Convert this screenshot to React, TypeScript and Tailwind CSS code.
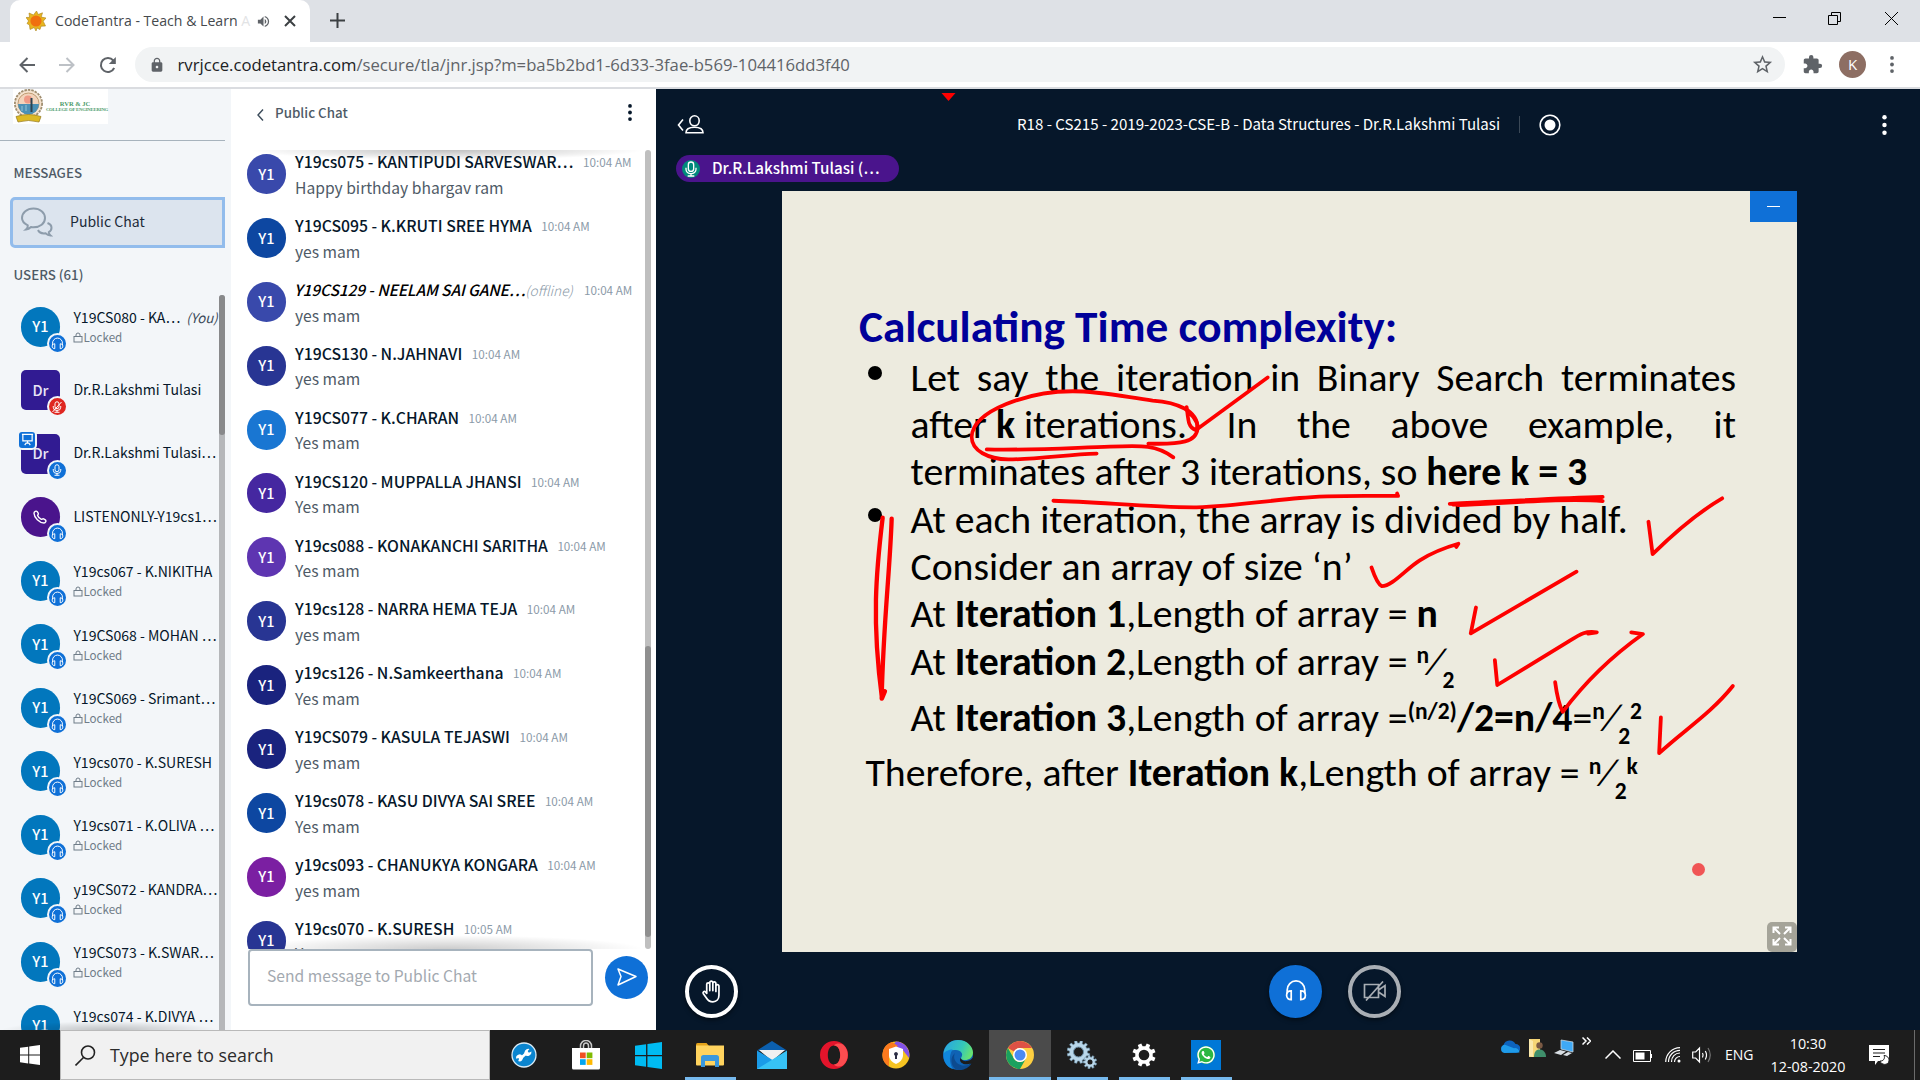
import React from "react";
import { FaWhatsapp } from "react-icons/fa";
import { MdExtension, MdLock, MdStarBorder, MdVolumeUp } from "react-icons/md";

type Kids = { children?: React.ReactNode };

/* ---------- icons ---------- */

function Headphones({ className }: { className: string }) {
  return (
    <svg viewBox="0 0 24 24" className={className} fill="none" stroke="currentColor" strokeWidth="1.800">
      <path d="M2.800 15v-3.500a9.200 9.500 0 0 1 18.400 0V15" />
      <path d="M7 12.500v9c-2.800 0-4.800-1.500-4.800-4.500s2-4.500 4.800-4.500zM17 12.500v9c2.800 0 4.800-1.500 4.800-4.500s-2-4.500-4.800-4.500z" />
    </svg>
  );
}

function Mic({ className, muted }: { className: string; muted?: boolean }) {
  return (
    <svg viewBox="0 0 24 24" className={className} fill="none" stroke="currentColor" strokeWidth="2">
      <rect x="8" y="1.500" width="8" height="14" rx="4" />
      <path d="M4.500 10v2.500a7.500 6.500 0 0 0 15 0V10M12 19v3.500M7 22.500h10" />
      {muted && <path d="M21 2 3 22" />}
    </svg>
  );
}

function Padlock() {
  return (
    <svg viewBox="0 0 10 11" className="h-[11px] w-[10px]" fill="none" stroke="currentColor" strokeWidth="1">
      <rect x="1" y="4.500" width="8" height="5.500" />
      <path d="M3 4.500V3a2 2 0 0 1 4 0v1.500" />
    </svg>
  );
}

function Dots({ className }: { className: string }) {
  return (
    <svg viewBox="0 0 4 18" className={className} fill="currentColor">
      <circle cx="2" cy="2" r="2" />
      <circle cx="2" cy="9" r="2" />
      <circle cx="2" cy="16" r="2" />
    </svg>
  );
}

function Favicon() {
  return (
    <svg viewBox="0 0 20 20" className="h-5 w-5 shrink-0">
      <path d="M10.500 0l1.700 3.500 4.300-1.700-1.300 4.300L20 7l-2.800 3.200L19.500 15l-4.500.2L14 18.500l-3-1.500-1 3-1.800-3.500L4 18.500l-.5-4.500L1 12.500 2.600 10 0 6.500l3.600-.200L3 2l4.500 2z" fill="#e8b51f" stroke="#a9821a" strokeWidth=".6" />
      <circle cx="10" cy="10" r="5.600" fill="#f0700f" />
    </svg>
  );
}

/* ---------- browser chrome ---------- */

function TabStrip() {
  return (
    <div className="flex h-[42px] bg-[#dee1e6]">
      <div className="ml-[10px] flex w-[300px] items-center rounded-t-[10px] bg-white pl-4">
        <Favicon />
        <div className="ml-[9px] w-[192px] whitespace-nowrap text-[14.100px] text-[#45494d]">
          CodeTantra - Teach &amp; Learn <span className="text-[#e2e3e5]">A</span>
        </div>
        <MdVolumeUp className="ml-[9px] h-[15px] w-[15px] text-[#5f6368]" />
        <svg viewBox="0 0 12 12" className="ml-[13px] h-[12px] w-[12px]" stroke="#3c4043" strokeWidth="2">
          <path d="M1 1l10 10M11 1L1 11" />
        </svg>
      </div>
      <svg viewBox="0 0 15 15" className="ml-5 mt-[13px] h-[15px] w-[15px]" stroke="#3c4043" strokeWidth="2">
        <path d="M7.500 0v15M0 7.500h15" />
      </svg>
      <div className="ml-auto mr-[22px] flex h-[36px] items-center gap-[43px] text-black">
        <svg viewBox="0 0 13 13" className="h-[13px] w-[13px]" stroke="currentColor"><path d="M0 5.500h13" /></svg>
        <svg viewBox="0 0 13 13" className="-ml-px mr-px h-[13px] w-[13px]" stroke="currentColor" fill="none">
          <path d="M.5 3.500h9v9h-9zM3.500 3V.500h9v9H10" />
        </svg>
        <svg viewBox="0 0 13 13" className="h-[13px] w-[13px]" stroke="currentColor"><path d="M0 0l13 13M13 0L0 13" /></svg>
      </div>
    </div>
  );
}

function AddressBar() {
  return (
    <div className="flex h-[47px] items-center border-b-2 border-[#dadce0] bg-white pl-[19px] text-[#5f6368]">
      <svg viewBox="0 0 16 16" className="h-4 w-4" fill="none" stroke="currentColor" strokeWidth="2"><path d="M8.500 1L1.500 8l7 7M1.500 8H16" /></svg>
      <svg viewBox="0 0 16 16" className="ml-6 h-4 w-4 text-[#bdc1c6]" fill="none" stroke="currentColor" strokeWidth="2"><path d="M7.500 1l7 7-7 7M14.500 8H0" /></svg>
      <svg viewBox="0 0 18 18" className="ml-6 h-[18px] w-[18px]" fill="none" stroke="currentColor" strokeWidth="2">
        <path d="M15.200 12A7 7 0 1 1 14.300 4.500L15.500 6" />
        <path d="M16.800 1v7h-7z" fill="currentColor" stroke="none" />
      </svg>
      <div className="ml-[18px] flex h-[35px] w-[1650px] items-center rounded-full bg-[#f1f3f4] pl-[14px] pr-[11px]">
        <MdLock className="h-4 w-4" />
        <span className="ml-[12.500px] whitespace-nowrap text-[16.700px]">
          <span className="text-[#202124]">rvrjcce.codetantra.com</span>/secure/tla/jnr.jsp?m=ba5b2bd1-6d33-3fae-b569-104416dd3f40
        </span>
        <MdStarBorder className="ml-auto h-[23px] w-[23px]" />
      </div>
      <MdExtension className="ml-[17px] h-[21px] w-[21px]" />
      <div className="ml-[16px] flex h-[27px] w-[27px] items-center justify-center rounded-full bg-[#8d6e63] text-[15px] text-white">K</div>
      <Dots className="ml-[24px] h-[17px] w-[4px]" />
    </div>
  );
}

/* ---------- user list ---------- */

type User = { name: string; you?: boolean; kind?: "muted" | "presenter" | "phone" };

const users: User[] = [
  { name: "Y19CS080 - KA…", you: true },
  { name: "Dr.R.Lakshmi Tulasi", kind: "muted" },
  { name: "Dr.R.Lakshmi Tulasi…", kind: "presenter" },
  { name: "LISTENONLY-Y19cs1…", kind: "phone" },
  { name: "Y19cs067 - K.NIKITHA" },
  { name: "Y19CS068 - MOHAN …" },
  { name: "Y19CS069 - Srimant…" },
  { name: "Y19cs070 - K.SURESH" },
  { name: "Y19cs071 - K.OLIVA …" },
  { name: "y19CS072 - KANDRA…" },
  { name: "Y19CS073 - K.SWAR…" },
  { name: "Y19cs074 - K.DIVYA …" },
];

function UserAvatar({ kind }: { kind?: User["kind"] }) {
  const badge = "absolute -bottom-[7px] -right-[8px] flex h-[21px] w-[21px] items-center justify-center rounded-full border-2 border-[#f3f6f9] text-white";
  if (kind === "muted" || kind === "presenter") {
    return (
      <div className="relative flex h-10 w-[39px] items-center justify-center rounded-[5px] bg-[#311b92] pb-px text-[14.500px] font-medium text-[#e9e6f5]">
        Dr
        {kind === "presenter" && (
          <div className="absolute -left-[4px] -top-[4px] flex h-[20px] w-[20px] items-center justify-center rounded-[5px] border-2 border-[#f3f6f9] bg-[#0f70d7] text-white">
            <svg viewBox="0 0 14 14" className="h-[13px] w-[13px]" fill="none" stroke="currentColor" strokeWidth="1.300">
              <path d="M1 1.500h12M2 1.500v7h10v-7M7 8.500V11M4 13l1.500-2h3l1.500 2" />
            </svg>
          </div>
        )}
        {kind === "muted" ? (
          <div className={`${badge} bg-[#df2721]`}><Mic muted className="h-[12px] w-[12px]" /></div>
        ) : (
          <div className={`${badge} bg-[#0f70d7]`}><Mic className="h-[12px] w-[12px]" /></div>
        )}
      </div>
    );
  }
  const tone = kind === "phone" ? "bg-[#4a148c]" : "bg-[#0277bd]";
  return (
    <div className={`relative flex h-10 w-[39px] items-center justify-center rounded-full pb-px text-[14.500px] font-medium text-white ${tone}`}>
      {kind === "phone" ? (
        <svg viewBox="0 0 14 14" className="mt-px h-[14px] w-[14px]" fill="none" stroke="currentColor" strokeWidth="1.400">
          <path d="M1 3.200C1 1.500 3.300.500 4.200 1.700l1 1.500c.6 1-.6 1.800-.6 2.300.5 1.400 2.300 3.200 3.800 3.900.6.100 1.300-1 2.200-.5l1.700 1c1.300.9.300 3.100-1.300 3.100C6.500 12.900 1.100 7.600 1 3.200z" />
        </svg>
      ) : (
        "Y1"
      )}
      <div className={`${badge} bg-[#0f70d7]`}><Headphones className="h-[13px] w-[13px]" /></div>
    </div>
  );
}

function UserRow({ user }: { user: User }) {
  return (
    <div className="flex h-[63.500px] shrink-0 items-center pl-[21px]">
      <UserAvatar kind={user.kind} />
      <div className="-mt-[2px] ml-[13.500px] w-[146px] whitespace-nowrap">
        <div className="flex h-[20px] items-center text-[14.050px] text-[#06172a]">
          {user.name}
          {user.you && <span className="ml-[6px] text-[13.300px] italic text-[#3c4b59]">(You)</span>}
        </div>
        {!user.kind && (
          <div className="-mb-[4px] flex h-[20px] items-center text-[#6f7c88]">
            <Padlock />
            <span className="text-[11.600px]">Locked</span>
          </div>
        )}
      </div>
    </div>
  );
}

function Sidebar() {
  return (
    <div className="flex w-[231px] flex-col bg-[#f3f6f9] font-['Noto_Sans_CJK_SC',sans-serif]">
      <div className="flex h-[52px] w-[225px] flex-col border-b border-[#a7b3bd] pl-[13px]">
        <div className="flex h-[35px] w-[95px] items-center bg-white">
          <svg viewBox="0 0 31 35" className="h-[35px] w-[31px] shrink-0">
            <circle cx="15.500" cy="14.500" r="13.600" fill="#f5e3cf" stroke="#a08e70" strokeWidth="1.800" strokeDasharray="2.500 1" />
            <circle cx="15.500" cy="14.500" r="10.500" fill="#f2d3bb" stroke="#b08a5c" strokeWidth=".8" />
            <path d="M5 15h21a10.500 10.500 0 0 1-21 0z" fill="#4a90b5" />
            <circle cx="15" cy="10.500" r="4" fill="#ee9a86" />
            <path d="M18.500 9v14" stroke="#2d4350" strokeWidth="2" />
            <path d="M9 17v5M13 16v6" stroke="#79b3cc" strokeWidth="1.500" />
            <path d="M3 27.500q12.500-4 25 0l-2 5.500q-10.500-3-21 0z" fill="#dcb924" stroke="#94781a" strokeWidth=".7" />
          </svg>
          <div className="ml-[2px] flex w-[62px] flex-col items-center font-['Liberation_Serif',serif] font-bold leading-[6px] text-[#4b9a69]">
            <div className="ml-[-4px] text-[6.500px]">RVR &amp; JC</div>
            <div className="whitespace-nowrap text-[4.700px] tracking-[-0.160px]">COLLEGE OF ENGINEERING</div>
          </div>
        </div>
      </div>
      <div className="mt-[21px] flex h-[22px] items-center pl-[13.500px] text-[13.300px] font-medium text-[#4e5a66]">MESSAGES</div>
      <div className="ml-[10px] mt-[13px] flex h-[51px] w-[215px] items-center rounded-l-[5px] border-[3px] border-[#92bcec] bg-[#dce4ee] pl-2">
        <svg viewBox="0 0 32 30" className="-mt-px h-[30px] w-[32px]" fill="none" stroke="#8d9cab" strokeWidth="2">
          <path d="M5 22.500c1.500-1.300 2-2.500 1.800-4.200C3 16.500 1 14 1 11 1 5.500 6 1.500 12.500 1.500S24 5.500 24 11s-5 9.300-11.500 9.300c-1 0-1.700-.1-2.500-.3-1.500 1.500-3 2.300-5 2.500z" />
          <path d="M26.500 16c2.500 1 4 2.700 4 4.700s-1 3.500-2.700 4.500c0 1.300.5 2.300 1.700 3.300-2 0-3.500-.700-5-2.200-3.500.400-6.500-1-7.500-3.300" />
        </svg>
        <span className="-mt-[2px] ml-[17px] text-[14.050px] text-[#1c2b3a]">Public Chat</span>
      </div>
      <div className="mt-[16px] flex h-[22px] items-center pl-[13.500px] text-[13.300px] font-medium text-[#4e5a66]">USERS (61)</div>
      <div className="mt-[9px] flex min-h-0 flex-1">
        <div className="relative flex w-[219px] flex-col overflow-hidden">
          {users.map((u) => (
            <UserRow key={u.name} user={u} />
          ))}
          <div className="absolute -bottom-[9px] left-0 h-[18px] w-[219px] bg-[radial-gradient(ellipse_at_center,rgba(0,0,0,0.22),transparent_70%)]" />
        </div>
        <div className="h-full w-[6px] rounded-t-full bg-[#b5b7ba]">
          <div className="h-[140px] w-[6px] rounded-full bg-[#88898b]" />
        </div>
      </div>
    </div>
  );
}

/* ---------- chat ---------- */

const messages = [
  { name: "Y19cs075 - KANTIPUDI SARVESWAR…", text: "Happy birthday bhargav ram", tone: "bg-[#3949ab]" },
  { name: "Y19CS095 - K.KRUTI SREE HYMA", text: "yes mam", tone: "bg-[#0d47a1]" },
  { name: "Y19CS129 - NEELAM SAI GANE…", text: "yes mam", tone: "bg-[#3949ab]", offline: true },
  { name: "Y19CS130 - N.JAHNAVI", text: "yes mam", tone: "bg-[#283593]" },
  { name: "Y19CS077 - K.CHARAN", text: "Yes mam", tone: "bg-[#1976d2]" },
  { name: "Y19CS120 - MUPPALLA JHANSI", text: "Yes mam", tone: "bg-[#4527a0]" },
  { name: "Y19cs088 - KONAKANCHI SARITHA", text: "Yes mam", tone: "bg-[#5e35b1]" },
  { name: "Y19cs128 - NARRA HEMA TEJA", text: "yes mam", tone: "bg-[#283593]" },
  { name: "y19cs126 - N.Samkeerthana", text: "Yes mam", tone: "bg-[#1a237e]" },
  { name: "Y19CS079 - KASULA TEJASWI", text: "yes mam", tone: "bg-[#1a237e]" },
  { name: "Y19cs078 - KASU DIVYA SAI SREE", text: "Yes mam", tone: "bg-[#0d47a1]" },
  { name: "y19cs093 - CHANUKYA KONGARA", text: "yes mam", tone: "bg-[#7b1fa2]" },
  { name: "Y19cs070 - K.SURESH", text: "Yes mam", tone: "bg-[#283593]", time: "10:05 AM" },
];

function Chat() {
  return (
    <div className="flex w-[425px] flex-col bg-white font-['Noto_Sans_CJK_SC',sans-serif]">
      <div className="flex h-[61px] pl-[26px] pt-[12px]">
        <svg viewBox="0 0 7 12" className="mt-[8px] h-[12px] w-[7px]" fill="none" stroke="#3a4a59" strokeWidth="1.400"><path d="M6 .5L1 6l5 5.500" /></svg>
        <div className="ml-[11px] mt-px flex h-[22px] items-center text-[13.350px] font-medium text-[#4e5a66]">Public Chat</div>
        <Dots className="ml-auto mr-[24px] mt-[3px] h-[17px] w-[4px] text-[#06172a]" />
      </div>
      <div className="flex h-[799px] pl-4">
        <div className="relative flex w-[398px] flex-col overflow-hidden">
          <div className="absolute -top-[10px] left-0 h-[20px] w-full bg-[radial-gradient(ellipse_at_center,rgba(0,0,0,0.25),transparent_70%)]" />
          {messages.map((m) => (
            <div key={m.name} className="relative flex h-[63.900px] shrink-0 whitespace-nowrap pt-[4px]">
              <div className={`flex h-10 w-[39px] items-center justify-center rounded-full pb-px text-[14.500px] font-medium text-white ${m.tone}`}>Y1</div>
              <div className="ml-[9px]">
                <div className="-mt-[2px] flex h-[20px] items-center">
                  <span className={m.offline ? "-ml-px text-[15.500px] font-medium italic tracking-[-0.100px] text-black" : "text-[15.750px] font-medium text-[#06172a]"}>{m.name}</span>
                  {m.offline && <span className="text-[13.700px] font-light italic text-[#8b9aa8]">(offline)</span>}
                  <span className={`text-[11.700px] text-[#8b9aa8] ${m.offline ? "ml-[11px]" : "ml-[9.500px]"}`}>{m.time ?? "10:04 AM"}</span>
                </div>
                <div className="mt-[4.500px] flex h-[22px] items-center text-[15.650px] text-[#4e5a66]">{m.text}</div>
              </div>
            </div>
          ))}
          <div className="absolute -bottom-[14px] left-0 h-[28px] w-full bg-[radial-gradient(ellipse_at_center,rgba(0,0,0,0.2),transparent_70%)]" />
        </div>
        <div className="h-full w-[6px] rounded-full bg-[#bfbfbf] pt-[496px]">
          <div className="h-[291px] w-[6px] rounded-full bg-[#8f8f8f]" />
        </div>
      </div>
      <div className="flex items-center pl-[17px]">
        <div className="flex h-[57px] w-[345px] items-center rounded-[4px] border-2 border-[#a7b3bd] pb-[3px] pl-[17px] text-[15.650px] text-[#a3a9b0]">Send message to Public Chat</div>
        <div className="ml-3 flex h-[43px] w-[43px] items-center justify-center rounded-full bg-[#0f70d7]">
          <svg viewBox="0 0 20 18" className="mb-px h-[18px] w-[20px]" fill="none" stroke="white" strokeWidth="1.500" strokeLinejoin="round">
            <path d="M1 1l18 7.500L1 17l3-8.500z" />
          </svg>
        </div>
      </div>
    </div>
  );
}

/* ---------- slide ---------- */

function Sup({ children }: Kids) {
  return <span className="align-[12.500px] text-[23.500px] font-bold leading-none">{children}</span>;
}
function Sub({ children }: Kids) {
  return <span className="align-[-12.500px] text-[23.500px] font-bold leading-none">{children}</span>;
}

function Line({ children, bullet, className = "" }: Kids & { bullet?: boolean; className?: string }) {
  return (
    <div className={`flex h-[47.350px] whitespace-nowrap leading-[47.350px] ${className}`}>
      <div className="w-[51.500px] shrink-0 pl-[9px] pt-[12px]">{bullet && <div className="h-[14px] w-[14px] rounded-full bg-black" />}</div>
      <div className="w-[825.500px]">{children}</div>
    </div>
  );
}

function Annotations() {
  return (
    <svg viewBox="782 191 1015 761" className="absolute inset-0 h-full w-full" fill="none" stroke="#fe0000" strokeLinecap="round" strokeLinejoin="round">
      <g transform="translate(780 280) scale(.33333 .34439)" strokeWidth="11">
        <path d="M1105 475c100 3 145-5 148-45 0-50-60-75-135-80-90-12-160-27-240-27-130 0-300 55-303 133 0 40 50 64 110 65 90 0 180-15 265-17" />
        <path d="M620 492c130 3 260-5 370-8 100-4 140-5 190 31M1220 369c5 40 5 60 26 66 15-10 0-35-20-50M1250 434L1463 283" />
        <path d="M820 641c140 3 290 20 430 19 110-3 200-18 310-27" />
        <path d="M308 690c-20 160-33 300-2 525l9-21M335 693c-5 150-25 300-30 522" strokeWidth="13" />
      </g>
      <g transform="translate(1260 280) scale(.34439)" strokeWidth="11">
        <path d="M116 633c90-9 180-6 285-6l-3-7" />
        <path d="M551 650c130-6 300-16 444-20M575 654c140-6 320-22 420-12M560 652l430-18" />
        <path d="M1128 702l12 94q110-108 202-162M324 835c12 35 20 50 30 54 30 0 70-50 110-75s70-36 112-48l-6 9" />
        <path d="M627 951l-15 75L919 847M682 1104l7 72 205-125c40-25 50-32 84-28l-25 4" />
        <path d="M857 1168q8 60 22 86c60-80 140-160 233-226l-34-5M1164 1270l-5 104c70-65 150-115 214-195" />
      </g>
      <circle cx="1698.500" cy="869.500" r="6.500" fill="#f05555" stroke="none" />
    </svg>
  );
}

function Slide() {
  return (
    <div className="relative h-[761px] w-[1015px] bg-[#edebdf] pl-[77px] pt-[108.500px] font-['Carlito','Lato',sans-serif] text-[39.720px] text-black">
      <div className="h-[54px] whitespace-nowrap text-[45.250px] font-bold leading-[54px] text-[#000099]">Calculating Time complexity:</div>
      <Line bullet><div className="flex justify-between"><span>Let</span><span>say</span><span>the</span><span>iteration</span><span>in</span><span>Binary</span><span>Search</span><span>terminates</span></div></Line>
      <Line><div className="flex justify-between"><span>after <b>k</b> iterations.</span><span>In</span><span>the</span><span>above</span><span>example,</span><span>it</span></div></Line>
      <Line>terminates after 3 iterations, so <b>here k = 3</b></Line>
      <Line bullet>At each iteration, the array is divided by half.</Line>
      <Line>Consider an array of size ‘n’</Line>
      <Line>At <b>Iteration 1</b>,Length of array = <b>n</b></Line>
      <Line>At <b>Iteration 2</b>,Length of array = <Sup>n</Sup>⁄<Sub>2</Sub></Line>
      <Line className="mt-[8.750px]">At <b>Iteration 3</b>,Length of array =<Sup>(n/2)</Sup><b>/2=n/4</b>=<Sup>n</Sup>⁄<Sub>2</Sub><Sup>2</Sup></Line>
      <div className="mt-[8.450px] h-[47.350px] whitespace-nowrap pl-[6.500px] leading-[47.350px]">Therefore, after <b>Iteration k</b>,Length of array = <Sup>n</Sup>⁄<Sub>2</Sub><Sup>k</Sup></div>
      <Annotations />
      <div className="absolute right-0 top-0 flex h-[31px] w-[47px] items-center justify-center bg-[#0f70d7]">
        <div className="h-[1.500px] w-[13px] bg-white" />
      </div>
      <div className="absolute bottom-0 right-0 flex h-[30px] w-[30px] items-center justify-center rounded-[5px] bg-[#a5a499]">
        <svg viewBox="0 0 20 20" className="-mt-[3px] h-5 w-5" fill="none" stroke="white" strokeWidth="2">
          <path d="M1.500 7V1.500H7M1.500 1.500L8 8M13 1.500h5.500V7M18.500 1.500L12 8M1.500 13v5.500H7M1.500 18.500L8 12M18.500 13v5.500H13M18.500 18.500L12 12" />
        </svg>
      </div>
    </div>
  );
}

function Stage() {
  return (
    <div className="relative flex flex-1 flex-col bg-[#06172a] font-['Noto_Sans_CJK_SC',sans-serif] text-white">
      <svg viewBox="0 0 14 8" className="absolute left-[285px] top-[4px] h-[8px] w-[15px]"><path d="M0 0h14L7 8z" fill="#fe0000" /></svg>
      <div className="flex h-[66px] items-center pl-[21px] pr-[33px] pt-[5px]">
        <svg viewBox="0 0 27 19" className="h-[19px] w-[27px]" fill="none" stroke="white" strokeWidth="1.600">
          <path d="M6 4.500L1.500 10 6 15.500" />
          <ellipse cx="17.500" cy="5.800" rx="4.700" ry="5" />
          <path d="M9 17.800c0-3.500 3-5.500 8.500-5.500s8.500 2 8.500 5.500z" />
        </svg>
        <div className="-mt-[2px] ml-[313px] whitespace-nowrap text-[15.090px]">R18 - CS215 - 2019-2023-CSE-B - Data Structures - Dr.R.Lakshmi Tulasi</div>
        <div className="ml-[19px] h-[17px] w-px bg-[#3b4957]" />
        <svg viewBox="0 0 22 22" className="ml-[19px] h-[22px] w-[22px]">
          <circle cx="11" cy="11" r="9.800" fill="none" stroke="white" strokeWidth="1.600" />
          <circle cx="11" cy="11" r="5.500" fill="white" />
        </svg>
        <Dots className="ml-auto h-[20px] w-[5px]" />
      </div>
      <div className="ml-5 flex h-[27px] w-[223px] items-center rounded-full bg-[#4a148c] pl-[6px]">
        <div className="flex h-[18px] w-[18px] items-center justify-center rounded-full bg-[#00897b]"><Mic className="h-[16px] w-[16px]" /></div>
        <div className="-mt-[2px] ml-[12px] whitespace-nowrap text-[15.200px] font-medium">Dr.R.Lakshmi Tulasi (…</div>
      </div>
      <div className="ml-[126px] mt-[9px]"><Slide /></div>
      <div className="mt-[13px] flex pl-[29px]">
        <div className="flex h-[53px] w-[53px] items-center justify-center rounded-full border-4 border-white shadow-[0_2px_4px_rgba(0,0,0,0.5)]">
          <svg viewBox="0 0 22 24" className="mb-px h-[23px] w-[21px]" fill="none" stroke="white" strokeWidth="1.800" strokeLinejoin="round" strokeLinecap="round">
            <path d="M6 14V4.500a1.600 1.600 0 0 1 3.200 0V11 2.800a1.600 1.600 0 0 1 3.200 0V11 3.500a1.600 1.600 0 0 1 3.200 0V12 6.500a1.600 1.600 0 0 1 3.200 0V16c0 4-2.500 6.800-6.300 6.800-3.500 0-5.300-1.300-6.800-4L2.300 14c-.700-1.700 1.200-2.800 2.300-1.500z" />
          </svg>
        </div>
        <div className="ml-[531px] flex h-[53px] w-[53px] items-center justify-center rounded-full bg-[#0f70d7] shadow-[0_2px_4px_rgba(0,0,0,0.5)]"><Headphones className="mb-[2px] h-[23px] w-[26px]" /></div>
        <div className="ml-[26px] flex h-[53px] w-[53px] items-center justify-center rounded-full border-4 border-[#a9aeb4] text-[#a9aeb4] shadow-[0_2px_4px_rgba(0,0,0,0.5)]">
          <svg viewBox="0 0 24 20" className="mb-px h-[20px] w-[24px]" fill="none" stroke="currentColor" strokeWidth="1.700">
            <path d="M1.500 3.500h14v13h-14zM15.500 9l6.500-4.500v11L15.500 11M3 19.500L20 .500" />
          </svg>
        </div>
      </div>
    </div>
  );
}

/* ---------- taskbar ---------- */

function WinLogo({ className }: { className: string }) {
  return (
    <svg viewBox="0 0 20 20" className={className} fill="currentColor">
      <path d="M0 2.800l8.200-1.100v7.900H0zM9.200 1.500L20 0v9.600H9.200zM0 10.500h8.200v7.900L0 17.200zM9.200 10.500H20V20L9.200 18.500z" />
    </svg>
  );
}

function gear(cx: number, cy: number, r: number, inner: number, teeth: number) {
  const pts: string[] = [];
  for (let i = 0; i < teeth; i++) {
    for (const [o, rad] of [[-0.3, inner], [-0.2, r], [0.2, r], [0.3, inner]]) {
      const a = ((i + 0.5 + o) / teeth) * Math.PI * 2;
      pts.push(`${(cx + Math.cos(a) * rad).toFixed(2)},${(cy + Math.sin(a) * rad).toFixed(2)}`);
    }
  }
  return pts.join(" ");
}

const taskIcons: { icon: React.ReactNode; open?: boolean; active?: boolean }[] = [
  {
    icon: (
      <svg viewBox="0 0 26 26" className="h-[26px] w-[26px]">
        <circle cx="13" cy="13" r="12" fill="#0b85cf" stroke="#d9eaf5" strokeWidth="1.300" />
        <path d="M9 17l7-6.500" stroke="white" strokeWidth="2.600" strokeLinecap="round" />
        <path d="M14 13a4 4 0 0 1 4.500-6L16.500 9.200l1.300 1.500 2.700-1.200A4 4 0 0 1 14 13zM11.500 14a3.500 3.500 0 0 1-4.500 5l1.500-1.800-1-1.200-2.300.8A3.500 3.500 0 0 1 11.500 14z" fill="white" />
      </svg>
    ),
  },
  {
    icon: (
      <svg viewBox="0 0 30 30" className="h-[30px] w-[30px]">
        <path d="M9.500 9V6a5.500 5.500 0 0 1 11 0v3M12.500 9V6a2.500 3 0 0 1 5 0v3" fill="none" stroke="#c8c8c8" strokeWidth="1.500" />
        <path d="M1 8h28v20a1.500 1.500 0 0 1-1.500 1.500h-25A1.500 1.500 0 0 1 1 28z" fill="white" />
        <path d="M9 12.500h5.700v5.700H9z" fill="#f05023" />
        <path d="M15.700 12.500h5.700v5.700h-5.700z" fill="#7fba02" />
        <path d="M9 19.200h5.700v5.700H9z" fill="#01a5f0" />
        <path d="M15.700 19.200h5.700v5.700h-5.700z" fill="#ffb901" />
      </svg>
    ),
  },
  { icon: <WinLogo className="h-[27px] w-[27px] text-[#00bbf2]" /> },
  {
    open: true,
    icon: (
      <svg viewBox="0 0 28 24" className="h-[24px] w-[28px]">
        <path d="M0 1.500Q0 0 1.500 0h9l2.500 3H0z" fill="#e3a21a" />
        <path d="M0 2.500h28v19q0 1-1 1H1q-1 0-1-1z" fill="#ffd35e" />
        <path d="M5 24V14.500Q5 12 7.500 12h13q2.500 0 2.500 2.500V24h-4v-6H9v6z" fill="#3a98dd" />
      </svg>
    ),
  },
  {
    icon: (
      <svg viewBox="0 0 30 28" className="h-[28px] w-[30px]">
        <path d="M0 9.500L15 0l15 9.500z" fill="#0b5fae" />
        <path d="M2 9h26L15 20z" fill="#f1f1f1" />
        <path d="M0 9.500L30 28H0z" fill="#1a9be8" />
        <path d="M30 9.500V28H0z" fill="#37c2f5" />
      </svg>
    ),
  },
  {
    icon: (
      <svg viewBox="0 0 28 28" className="h-[28px] w-[28px]">
        <path fillRule="evenodd" d="M14 0a14 14 0 1 0 0 28 14 14 0 0 0 0-28zm0 4.500c3.800 0 6.200 4 6.200 9.500s-2.400 9.500-6.200 9.500S7.800 19.500 7.800 14 10.200 4.500 14 4.500z" fill="#e3142b" />
        <path d="M14 4.500c3.800 0 6.200 4 6.200 9.500s-2.400 9.500-6.200 9.500c2 2.500 6 2.500 9 1A14 14 0 0 0 23 3.500c-3-1.500-7-1.500-9 1z" fill="#fb4d50" />
      </svg>
    ),
  },
  {
    icon: (
      <svg viewBox="0 0 28 28" className="h-[28px] w-[28px]">
        <circle cx="14" cy="14" r="13.500" fill="#f6c421" />
        <path d="M14 .500A13.500 13.500 0 0 1 27 17L20 8 10 5z" fill="#8352e8" />
        <path d="M10 1A13.500 13.500 0 0 0 7 25.500L7 12 16 5z" fill="#fb7a1e" />
        <path d="M14 5.500l7 2.500v6c0 4.500-3 7-7 9-4-2-7-4.500-7-9V8z" fill="white" />
        <path d="M14 11a2 2 0 0 1 1 3.700V18h-2v-3.300A2 2 0 0 1 14 11z" fill="#2c2e45" />
      </svg>
    ),
  },
  {
    icon: (
      <svg viewBox="0 0 30 30" className="h-[30px] w-[30px]">
        <defs>
          <linearGradient id="edgeTop" x1="0" y1=".3" x2="1" y2=".6">
            <stop offset="0" stopColor="#2aa7e0" />
            <stop offset=".6" stopColor="#35c8b8" />
            <stop offset="1" stopColor="#6be56c" />
          </linearGradient>
        </defs>
        <circle cx="15" cy="15" r="15" fill="#0f62b4" />
        <path d="M.5 14C1 6 7 0 15 0c9 0 15 6.500 15 12.500 0 5-4 7.500-8 7.500s-4.500-1.500-3.500-3c2-3-.5-7-5.500-7S2 12 .5 14z" fill="url(#edgeTop)" />
        <path d="M10 29C3 27 0 20 .5 14 2 11 6 9.500 9.500 9.500c-5 8-1.500 17 .500 19.500z" fill="#1187dc" />
        <path d="M12 13c-3 6 2 12.500 9 12.500 3 0 5.500-1 7.500-2C25 29 19 30.500 15 30 8 28 6 18 12 13z" fill="#0c4a8f" />
        <path d="M17.500 18c1 2.500 4 3.500 6.500 3 2.500-.3 4.500-1.500 6-3.500v4.500l-1.500 1c-2 1-4 1.500-6.500 1.200-4-.5-6-3.700-4.500-6.200z" fill="#1d1d1d" />
      </svg>
    ),
  },
  {
    open: true,
    active: true,
    icon: (
      <svg viewBox="0 0 28 28" className="h-[28px] w-[28px]">
        <circle cx="14" cy="14" r="14" fill="#fdcf41" />
        <path d="M1.900 7A14 14 0 0 1 26.100 7H14a7 7 0 0 0-6 3.500z" fill="#de5145" />
        <path d="M1.900 7A14 14 0 0 0 14 28l6-10.500a7 7 0 0 1-12.100 0z" fill="#1aa15f" />
        <circle cx="14" cy="14" r="7" fill="white" />
        <circle cx="14" cy="14" r="5.500" fill="#4a8af4" />
      </svg>
    ),
  },
  {
    open: true,
    icon: (
      <svg viewBox="0 0 30 28" className="h-[28px] w-[30px]">
        <polygon points={gear(11.5, 11, 11.5, 9, 12)} fill="#b9d7ea" stroke="#6f93ab" strokeWidth=".6" />
        <circle cx="11.500" cy="11" r="5" fill="#1d1d1d" stroke="#6f93ab" />
        <polygon points={gear(23, 21, 6.8, 5, 9)} fill="#b9d7ea" stroke="#6f93ab" strokeWidth=".6" />
        <circle cx="23" cy="21" r="2.500" fill="#1d1d1d" />
      </svg>
    ),
  },
  {
    open: true,
    icon: (
      <svg viewBox="0 0 24 24" className="mb-px h-[24px] w-[24px]">
        <polygon points={gear(12, 12, 11.8, 8.8, 8)} fill="white" />
        <circle cx="12" cy="12" r="5.300" fill="#1d1d1d" />
      </svg>
    ),
  },
  {
    open: true,
    icon: (
      <div className="flex h-[30px] w-[30px] items-center justify-center bg-[#0078d7]">
        <div className="flex h-[18px] w-[18px] items-center justify-center rounded-full bg-[#2cb742]"><FaWhatsapp className="h-[20px] w-[20px] shrink-0 text-white" /></div>
      </div>
    ),
  },
];

function Tray() {
  return (
    <div className="ml-auto flex h-[50px] text-white">
      <svg viewBox="0 0 20 13" className="mt-[10px] h-[13px] w-[20px]">
        <path d="M4 12.500A4 4 0 0 1 3.500 5 6.500 6.500 0 0 1 15.500 4 4.500 4.500 0 0 1 16 13z" fill="#0d63bd" />
        <path d="M4.500 13a4.200 4.200 0 0 1 .5-8.300l9 3.500a4.500 4.500 0 0 1 5.500 4.300z" fill="#1f9be9" />
      </svg>
      <svg viewBox="0 0 17 18" className="ml-[9px] mt-[9px] h-[18px] w-[17px]">
        <path d="M0 0h11v18H0z" fill="#f7d676" /><path d="M0 0l4 2v16l-4-1z" fill="#fbe9ad" />
        <circle cx="10.500" cy="6.500" r="3.200" fill="#7b5a44" />
        <path d="M5 18c0-5 2-7.500 5.500-7.500S17 13 17 18z" fill="#3f8f6b" />
      </svg>
      <svg viewBox="0 0 20 18" className="ml-[8px] mt-[9px] h-[18px] w-[20px]">
        <path d="M7 1l12 2v10L7 10z" fill="#3fa9f5" stroke="#c8d6df" strokeWidth=".8" />
        <path d="M0 14l6-3 6 1.500L7 16zM9 16l5-3 4 1-5 3z" fill="#d8dee3" />
      </svg>
      <svg viewBox="0 0 9 8" className="ml-[8px] mt-[7px] h-[8px] w-[9px]" fill="none" stroke="white" strokeWidth="1.500"><path d="M.500.500L4 4 .500 7.500M5 .500L8.500 4 5 7.500" /></svg>
      <svg viewBox="0 0 16 9" className="ml-[14px] mt-[20px] h-[9px] w-[16px]" fill="none" stroke="white" strokeWidth="1.500"><path d="M.500 8.500L8 1l7.500 7.500" /></svg>
      <svg viewBox="0 0 19 12" className="ml-[12px] mt-[20px] h-[12px] w-[19px]" fill="none" stroke="white"><path d="M.500.500h17v11H.500zM18.500 4v4" /><path d="M2.500 2.500h9v7h-9z" fill="white" stroke="none" /></svg>
      <svg viewBox="0 0 16 16" className="ml-[13px] mt-[17px] h-[16px] w-[16px]" fill="none" stroke="white" strokeWidth="1.200">
        <circle cx="14" cy="14" r="1.500" fill="white" stroke="none" />
        <path d="M9.500 15A5.500 5.500 0 0 1 15 9.500M6.500 15A8.500 8.500 0 0 1 15 6M3.500 15A11.500 11.500 0 0 1 15 3.300M.700 15A14.500 14.500 0 0 1 15 .700" />
      </svg>
      <svg viewBox="0 0 20 18" className="ml-[11px] mt-[16px] h-[18px] w-[20px]" fill="none" stroke="white" strokeWidth="1.200">
        <path d="M.7 6h3L7.500 2v14L3.700 12h-3zM10.500 7q1.200 2 0 4.500M13.300 5q2.500 4 0 8.500" /><path d="M16 2q4.500 7 0 14" stroke="#777" />
      </svg>
      <div className="ml-[13px] mt-[14px] w-[30px] text-[14px] leading-[22px]">ENG</div>
      <div className="ml-[15px] mt-[3px] w-[76px] text-center text-[14.350px] leading-[22.500px]">
        <div>10:30</div>
        <div>12-08-2020</div>
      </div>
      <svg viewBox="0 0 21 21" className="ml-[23px] mt-[15px] h-[21px] w-[21px]">
        <path d="M0 0h20v16H9l-3 4v-4H0z" fill="white" />
        <path d="M4 4.500h12M4 8h12M4 11.500h7" stroke="#1d1d1d" strokeWidth="1.200" />
        <path d="M15 10.500c1.500 3-1 6-4 5.500 1 4 8 5 9 0 .5-3-2-5.500-5-5.500z" fill="white" stroke="#1d1d1d" />
      </svg>
      <div className="ml-[24px] mr-[5px] h-full w-px bg-[#6b6b6b]" />
    </div>
  );
}

function Taskbar() {
  return (
    <div className="flex h-[50px] bg-[#1d1d1d]">
      <div className="flex w-[60px] items-center justify-center"><WinLogo className="h-5 w-5 text-white" /></div>
      <div className="flex w-[430px] items-center border border-[#b9b9b9] bg-[#f1f1f1] pl-[14px]">
        <svg viewBox="0 0 21 21" className="h-[21px] w-[21px]" fill="none" stroke="#222" strokeWidth="1.600"><circle cx="13" cy="7.500" r="6.500" /><path d="M8.500 12.500L.500 20.500" /></svg>
        <span className="ml-[14px] text-[17.800px] text-[#2b2b2b]">Type here to search</span>
      </div>
      <div className="ml-[3px] flex">
        {taskIcons.map((t, i) => (
          <div key={i} className={`flex w-[62px] flex-col items-center ${t.active ? "bg-[#4b4b4b]" : ""}`}>
            <div className="flex h-[47px] items-center justify-center pt-[3px]">{t.icon}</div>
            {t.open && <div className={`h-[3px] bg-[#76b9ed] ${t.active ? "w-full" : "w-[51px]"}`} />}
          </div>
        ))}
      </div>
      <Tray />
    </div>
  );
}

export default function App() {
  return (
    <div className="flex h-[1080px] w-[1920px] flex-col overflow-hidden font-['Open_Sans',sans-serif]">
      <TabStrip />
      <AddressBar />
      <div className="flex h-[941px]">
        <Sidebar />
        <Chat />
        <Stage />
      </div>
      <Taskbar />
    </div>
  );
}
